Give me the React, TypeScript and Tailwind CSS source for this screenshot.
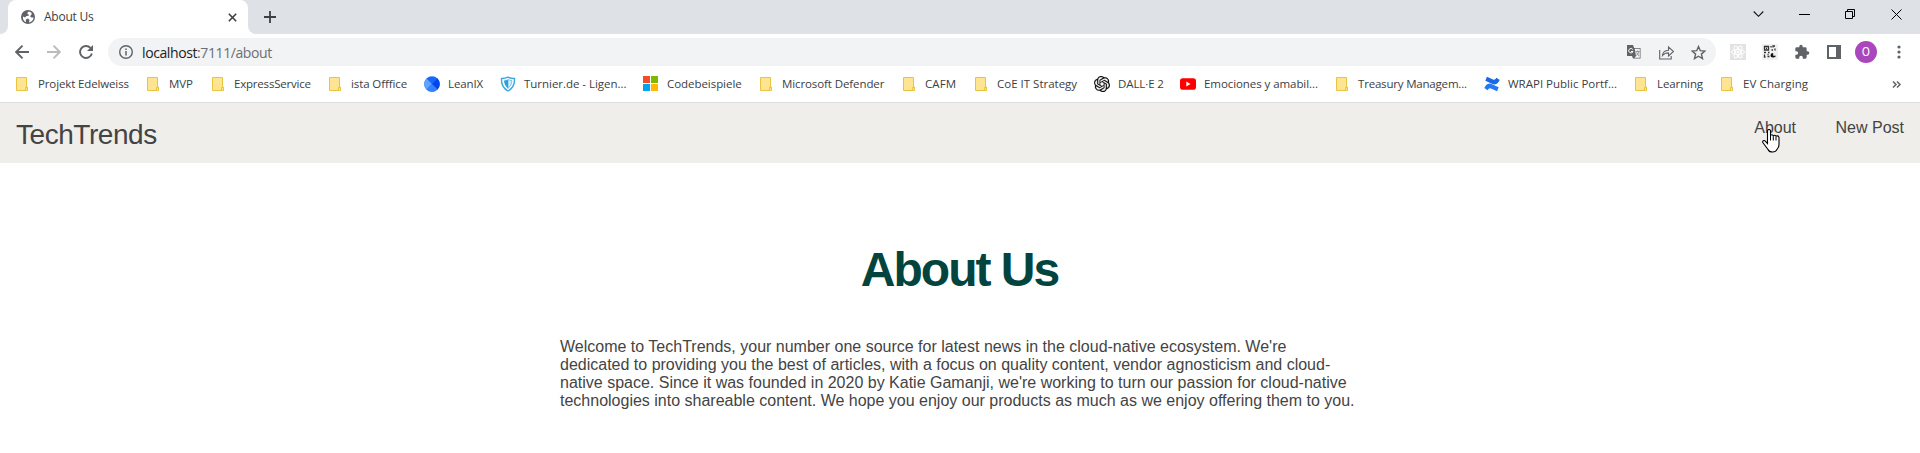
import React from "react";

type Kind = "folder" | "leanix" | "shield" | "microsoft" | "openai" | "youtube" | "confluence";

const bookmarks: { label: string; kind: Kind; slot: string; text: string }[] = [
  { label: "Projekt Edelweiss", kind: "folder", slot: "w-[131px]", text: "tracking-[-0.13px]" },
  { label: "MVP", kind: "folder", slot: "w-[65px]", text: "tracking-[-0.1px]" },
  { label: "ExpressService", kind: "folder", slot: "w-[117px]", text: "tracking-[-0.2px]" },
  { label: "ista Offfice", kind: "folder", slot: "w-[97px]", text: "tracking-[-0.1px]" },
  { label: "LeanIX", kind: "leanix", slot: "w-[76px]", text: "tracking-[-0.1px]" },
  { label: "Turnier.de - Ligen...", kind: "shield", slot: "w-[143px]", text: "tracking-[-0.03px]" },
  { label: "Codebeispiele", kind: "microsoft", slot: "w-[115px]", text: "tracking-[-0.05px]" },
  { label: "Microsoft Defender", kind: "folder", slot: "w-[143px]", text: "tracking-[-0.1px]" },
  { label: "CAFM", kind: "folder", slot: "w-[72px]", text: "tracking-[0.1px]" },
  { label: "CoE IT Strategy", kind: "folder", slot: "w-[121px]", text: "tracking-[0px]" },
  { label: "DALL·E 2", kind: "openai", slot: "w-[86px]", text: "tracking-[-0.1px]" },
  { label: "Emociones y amabil...", kind: "youtube", slot: "w-[154px]", text: "tracking-[-0.07px]" },
  { label: "Treasury Managem...", kind: "folder", slot: "w-[150px]", text: "tracking-[-0.19px]" },
  { label: "WRAPI Public Portf...", kind: "confluence", slot: "w-[149px]", text: "tracking-[0px]" },
  { label: "Learning", kind: "folder", slot: "w-[86px]", text: "tracking-[-0.1px]" },
  { label: "EV Charging", kind: "folder", slot: "w-[100px]", text: "tracking-[0.1px]" },
];

function BookmarkIcon({ kind }: { kind: Kind }) {
  const cls = "size-4 shrink-0";
  switch (kind) {
    case "folder":
      return (
        <svg className={cls} viewBox="0 0 16 16">
          <path d="M2.5 1.5h10v9.5h1v3.5h-11z" fill="#ffe592" stroke="#e9c441" />
          <path d="M11.5 14V11.5h2v3" fill="#ffe592" stroke="#e9c441" />
        </svg>
      );
    case "leanix":
      return (
        <svg className={cls} viewBox="0 0 16 16">
          <circle cx="8" cy="8" r="7.8" fill="#1766fd" />
          <path d="M8 8 2.5 2.5A7.8 7.8 0 0 0 2.5 13.5z" fill="#5ea4ff" />
          <path d="M8 8 13.5 2.5A7.8 7.8 0 0 1 13.5 13.5z" fill="#0046e8" />
          <path d="M8 8 2.5 13.5A7.8 7.8 0 0 0 13.5 13.5z" fill="#3580ff" />
        </svg>
      );
    case "shield":
      return (
        <svg className={cls} viewBox="0 0 16 16">
          <path d="M1.5 2.5Q5 2.6 8 1.2 11 2.6 14.5 2.5 15 11 8 15 1 11 1.5 2.5z" fill="#fff" stroke="#3aa9e0" strokeWidth="1.4" />
          <path d="M8 3.5Q6 4.5 4 4.6 4.2 9.5 8 12.5z" fill="#2b9fdc" />
          <path d="M8 3.5Q10 4.5 12 4.6 11.8 9.5 8 12.5z" fill="#d5effa" stroke="#3aa9e0" strokeWidth=".6" />
        </svg>
      );
    case "microsoft":
      return (
        <svg className={cls} viewBox="0 0 16 16">
          <path d="M0 0h7v7H0z" fill="#f25022" />
          <path d="M8 0h7v7H8z" fill="#7fba00" />
          <path d="M0 8h7v7H0z" fill="#00a4ef" />
          <path d="M8 8h7v7H8z" fill="#ffb900" />
        </svg>
      );
    case "openai":
      return (
        <svg className={cls} viewBox="0 0 24 24" fill="#111" stroke="#111" strokeWidth=".3">
          <path d="M22.28 9.82a5.98 5.98 0 0 0-.52-4.91 6.05 6.05 0 0 0-6.51-2.9A6.07 6.07 0 0 0 4.98 4.18a5.98 5.98 0 0 0-4 2.9 6.05 6.05 0 0 0 .74 7.1 5.98 5.98 0 0 0 .51 4.91 6.05 6.05 0 0 0 6.52 2.9A5.98 5.98 0 0 0 13.26 24a6.06 6.06 0 0 0 5.77-4.21 5.99 5.99 0 0 0 4-2.9 6.06 6.06 0 0 0-.75-7.07zm-9.02 12.61a4.48 4.48 0 0 1-2.88-1.04l.14-.08 4.78-2.76a.79.79 0 0 0 .39-.68v-6.74l2.02 1.17a.07.07 0 0 1 .04.05v5.58a4.5 4.5 0 0 1-4.49 4.5zM3.6 18.3a4.47 4.47 0 0 1-.54-3.01l.14.08 4.78 2.76a.77.77 0 0 0 .78 0l5.84-3.37v2.33a.08.08 0 0 1-.03.06L9.74 19.95a4.5 4.5 0 0 1-6.14-1.65zM2.34 7.9a4.48 4.48 0 0 1 2.37-1.97V11.6a.77.77 0 0 0 .39.68l5.81 3.35-2.02 1.17a.08.08 0 0 1-.07 0L4 14.01A4.5 4.5 0 0 1 2.34 7.87zm16.6 3.86-5.84-3.39 2.02-1.16a.08.08 0 0 1 .07 0l4.83 2.79a4.49 4.49 0 0 1-.68 8.1v-5.68a.79.79 0 0 0-.4-.66zm2.01-3.02-.14-.09-4.77-2.78a.78.78 0 0 0-.79 0L9.41 9.23V6.9a.07.07 0 0 1 .03-.06l4.83-2.79a4.5 4.5 0 0 1 6.68 4.66zM8.31 12.86l-2.02-1.16a.08.08 0 0 1-.04-.06V6.07a4.5 4.5 0 0 1 7.38-3.45l-.14.08-4.78 2.76a.79.79 0 0 0-.39.68zm1.1-2.36 2.6-1.5 2.61 1.5v3l-2.6 1.5-2.61-1.5z" />
        </svg>
      );
    case "youtube":
      return (
        <svg className={cls} viewBox="0 0 16 16">
          <rect y="2.3" width="16" height="11.4" rx="2.8" fill="#f00" />
          <path d="M6.3 5.6v4.8L10.5 8z" fill="#fff" />
        </svg>
      );
    case "confluence":
      return (
        <svg className={cls} viewBox="0 0 16 16">
          <path d="M.3 12 2 9.3Q4.6 6.3 8.5 8.4L14.7 11.3 13 15.3 7 12.5Q5 11.6 3.6 14.2z" fill="#2378f5" />
          <path d="M15.7 4 14 6.7Q11.4 9.7 7.5 7.6L1.3 4.7 3 .7 9 3.5Q11 4.4 12.4 1.8z" fill="#1868e8" />
        </svg>
      );
  }
}

function Tabs() {
  return (
    <div className="flex h-[34px] bg-[#dee1e6]">
      <div className="flex w-2 bg-white">
        <div className="w-2 rounded-br-[8px] bg-[#dee1e6]" />
      </div>
      <div className="flex w-60 items-center rounded-t-[8px] bg-white pl-[13px] pr-[11.5px]">
        <svg className="size-[14px]" viewBox="0 0 14 14">
          <circle cx="7" cy="7" r="7" fill="#5f6368" />
          <path d="M8 1.6Q6 2 6.5 4q1.8.3 1.3 1.7L5.5 6 4 7.5 2 6.5Q1.4 10.5 5 12.3L4.8 9.5 7 8.5 8.5 10 8 12.5Q12.3 11.5 12.6 7.5L10.5 7.5 9 6.2 10.6 4.5 10.5 2.7z" fill="#fff" />
        </svg>
        <span className="ml-[9px] flex-1 text-[12px] tracking-[-0.25px] text-[#3c4043]">About Us</span>
        <svg className="size-[9px]" viewBox="0 0 9 9"><path d="m.8.8 7.4 7.4M8.2.8.8 8.2" stroke="#3c4043" strokeWidth="1.6" /></svg>
      </div>
      <div className="flex w-2 bg-white">
        <div className="w-2 rounded-bl-[8px] bg-[#dee1e6]" />
      </div>
      <div className="flex flex-1 items-center pl-2">
        <svg className="size-3" viewBox="0 0 12 12"><path d="M6 0v12M0 6h12" stroke="#3c4043" strokeWidth="1.8" /></svg>
      </div>
      <div className="flex items-start gap-[35px] pr-[18px] pt-[9px]">
        <svg className="size-[11px]" viewBox="0 0 11 11"><path d="m.7 2.5 4.8 4.8L10.3 2.5" fill="none" stroke="#111" strokeWidth="1.1" /></svg>
        <svg className="size-[11px]" viewBox="0 0 11 11"><path d="M0 5.5h11" stroke="#000" /></svg>
        <svg className="size-[11px]" viewBox="0 0 11 11"><path d="M.5 2.5h7v7h-7zM2.5 2.5v-2h7v7h-2" fill="none" stroke="#000" /></svg>
        <svg className="size-[11px]" viewBox="0 0 11 11"><path d="m.5.5 10 10M10.5.5l-10 10" stroke="#000" /></svg>
      </div>
    </div>
  );
}

function Toolbar() {
  return (
    <div className="flex h-9 items-center bg-white pl-[15px]">
      <svg className="size-[14px]" viewBox="0 0 14 14"><path d="M14 7H1.5M7.5.7 1.2 7l6.3 6.3" fill="none" stroke="#5f6368" strokeWidth="1.9" /></svg>
      <svg className="ml-[18px] size-[14px]" viewBox="0 0 14 14"><path d="M0 7h12.5M6.5.7 12.8 7l-6.3 6.3" fill="none" stroke="#babcbe" strokeWidth="1.9" /></svg>
      <svg className="ml-[18px] size-[14px]" viewBox="0 0 14 14">
        <path d="M12.9 8.5A6 6 0 1 1 11.5 2.9" fill="none" stroke="#5f6368" strokeWidth="1.9" />
        <path d="M14 0v6H8z" fill="#5f6368" />
      </svg>
      <div className="ml-[15px] flex h-7 w-[1608px] items-center rounded-full bg-[#f1f3f4] pl-[11px] pr-[10.5px]">
        <svg className="size-[14px]" viewBox="0 0 14 14">
          <circle cx="7" cy="7" r="6.3" fill="none" stroke="#5f6368" strokeWidth="1.4" />
          <path d="M7 6v4.5M7 3.5V5" stroke="#5f6368" strokeWidth="1.5" />
        </svg>
        <span className="ml-[9px] flex-1 text-[14px] tracking-[-0.4px] text-[#6b6f74]"><span className="text-[#202124]">localhost</span>:7111/about</span>
        <svg className="size-[14px]" viewBox="0 0 14 14">
          <path d="M0 0h6l1.2 3H13.5v10.5H6L5 11H0z" fill="#5f6368" />
          <path d="M7.7 3.7h5.1v9.1H7.5L9 11z" fill="#f1f3f4" />
          <path d="M5.8 4.5A2.2 2.2 0 1 0 6 6.5H4" fill="none" stroke="#fff" strokeWidth="1" />
          <path d="M8.5 6.5h4M10.5 5.5v1M12 6.5Q11 9.5 9 10.5M9.5 7.5 12 11" fill="none" stroke="#7b7f84" strokeWidth=".8" />
        </svg>
        <svg className="ml-[18px] size-[15px]" viewBox="0 0 15 15" fill="none" stroke="#5f6368" strokeWidth="1.1">
          <path d="M.7 5v9h11.5v-3" />
          <path d="M3.5 10.5Q4 5.5 9.5 5.2V2l5 4.5-5 4.5V7.9Q6 7.7 3.5 10.5z" />
        </svg>
        <svg className="ml-[17px] size-[15px]" viewBox="0 0 15 15"><path d="m7.5 1.5 1.8 4.2 4.6.4-3.5 3 1.1 4.5-4-2.4-4 2.4 1.1-4.5-3.5-3 4.6-.4z" fill="none" stroke="#5f6368" strokeWidth="1.4" /></svg>
      </div>
      <svg className="ml-[14px] size-4" viewBox="0 0 16 16">
        <path d="M0 0h16v16H0z" fill="#e3e3e3" />
        <g fill="none" stroke="#fff"><ellipse cx="8" cy="8" rx="6.5" ry="2.5" /><ellipse cx="8" cy="8" rx="6.5" ry="2.5" transform="rotate(60 8 8)" /><ellipse cx="8" cy="8" rx="6.5" ry="2.5" transform="rotate(120 8 8)" /></g>
        <circle cx="8" cy="8" r="1.3" fill="#fff" />
      </svg>
      <svg className="ml-4 size-4" viewBox="0 0 16 16">
        <rect width="16" height="16" rx="1" fill="#f1f1f1" />
        <path d="M2.5 2.5h4v3.5h-4zM4 4.3h1M9 2v1.5M13 2h-2v1.5M9.5 6h1.5M13 4.5v2M2 8.5h2M6 8.5h1.5M2.5 10.5v2.5h1M5.5 12.5h2M5.5 10.5h1" fill="none" stroke="#333" strokeWidth="1.3" />
        <path d="M11.2 9v2.8H14A2.8 2.3 0 1 1 11.2 9z" fill="#111" />
      </svg>
      <svg className="ml-4 size-4" viewBox="0 0 24 24" fill="#5f6368"><path d="M20.5 11H19V7a2 2 0 0 0-2-2h-4V3.5a2.5 2.5 0 0 0-5 0V5H4a2 2 0 0 0-2 2v3.8h1.5a2.7 2.7 0 0 1 0 5.4H2V20a2 2 0 0 0 2 2h3.8v-1.5a2.7 2.7 0 0 1 5.4 0V22H17a2 2 0 0 0 2-2v-4h1.5a2.5 2.5 0 0 0 0-5z" /></svg>
      <svg className="ml-[17px] size-[14px]" viewBox="0 0 14 14"><path d="M0 0h14v14H0z" fill="#5f6368" /><path d="M2 2h7v10H2z" fill="#fff" /></svg>
      <div className="ml-[14px] flex size-[22px] items-center justify-center rounded-full bg-[#ab47bc] font-[Roboto,sans-serif] text-[12px] text-white">O</div>
      <svg className="ml-5 h-[14px] w-1" viewBox="0 0 4 14" fill="#5f6368"><circle cx="2" cy="2" r="1.6" /><circle cx="2" cy="7" r="1.6" /><circle cx="2" cy="12" r="1.6" /></svg>
    </div>
  );
}

export default function App() {
  return (
    <div className="relative h-[453px] w-[1920px] overflow-hidden bg-white">
      <div className="font-['Open_Sans','Noto_Sans',sans-serif]">
        <Tabs />
        <Toolbar />
        <div className="flex h-[33px] items-center border-b border-[#dadce0] bg-white pb-[4px] pl-[14px] text-[11.5px] text-[#3c4043]">
          {bookmarks.map((b) => (
            <div key={b.label} className={`flex shrink-0 items-center gap-2 ${b.slot}`}>
              <BookmarkIcon kind={b.kind} />
              <span className={`whitespace-nowrap ${b.text}`}>{b.label}</span>
            </div>
          ))}
          <svg className="ml-auto mr-[19px] h-[7px] w-[9px]" viewBox="0 0 9 7"><path d="m1 .5 3 3-3 3M5 .5l3 3-3 3" fill="none" stroke="#5f6368" strokeWidth="1.5" /></svg>
        </div>
      </div>
      <div className="font-['Liberation_Sans',Arial,sans-serif] text-[#444]">
        <nav className="flex h-[60px] justify-between bg-[#f0eeea] px-4">
          <a className="pt-[15px] text-[28px] leading-[34px] tracking-[-0.45px]">TechTrends</a>
          <div className="flex gap-[39.5px] pt-[15px] text-[16px] leading-5">
            <a>About</a>
            <a>New Post</a>
          </div>
        </nav>
        <main className="mx-auto w-[800px]">
          <h1 className="pr-px pt-[79px] text-center text-[48px] font-bold leading-[56px] tracking-[-2px] text-[#03443f]">About Us</h1>
          <p className="pt-[40px] text-[16px] leading-[18px]">
            Welcome to TechTrends, your number one source for latest news in the cloud-native ecosystem. We're dedicated to providing you the best of articles, with a focus on quality content, vendor agnosticism and cloud-native space. Since it was founded in 2020 by Katie Gamanji, we're working to turn our passion for cloud-native technologies into shareable content. We hope you enjoy our products as much as we enjoy offering them to you.
          </p>
        </main>
      </div>
      <svg className="absolute left-[1762px] top-[129px] h-6 w-[18px]" viewBox="0 0 18 24">
        <path d="M5.5 14.5V2q0-1.5 1.5-1.5T8.5 2v5q0-1.2 1.3-1.2T11.3 7.2q0-1 1.3-1t1.4 1.5q.3-1 1.5-.8t1.5 1.5v7q0 3-2 5-1 2.6-4.5 2.6T6 20.5L1 13.8q-.8-1.3.3-2t2.2.5z" fill="#fff" stroke="#000" strokeWidth="1.1" />
        <path d="M8.5 7v4.5M11.3 7.2v4.3M14 8v3.5" stroke="#000" />
      </svg>
    </div>
  );
}
